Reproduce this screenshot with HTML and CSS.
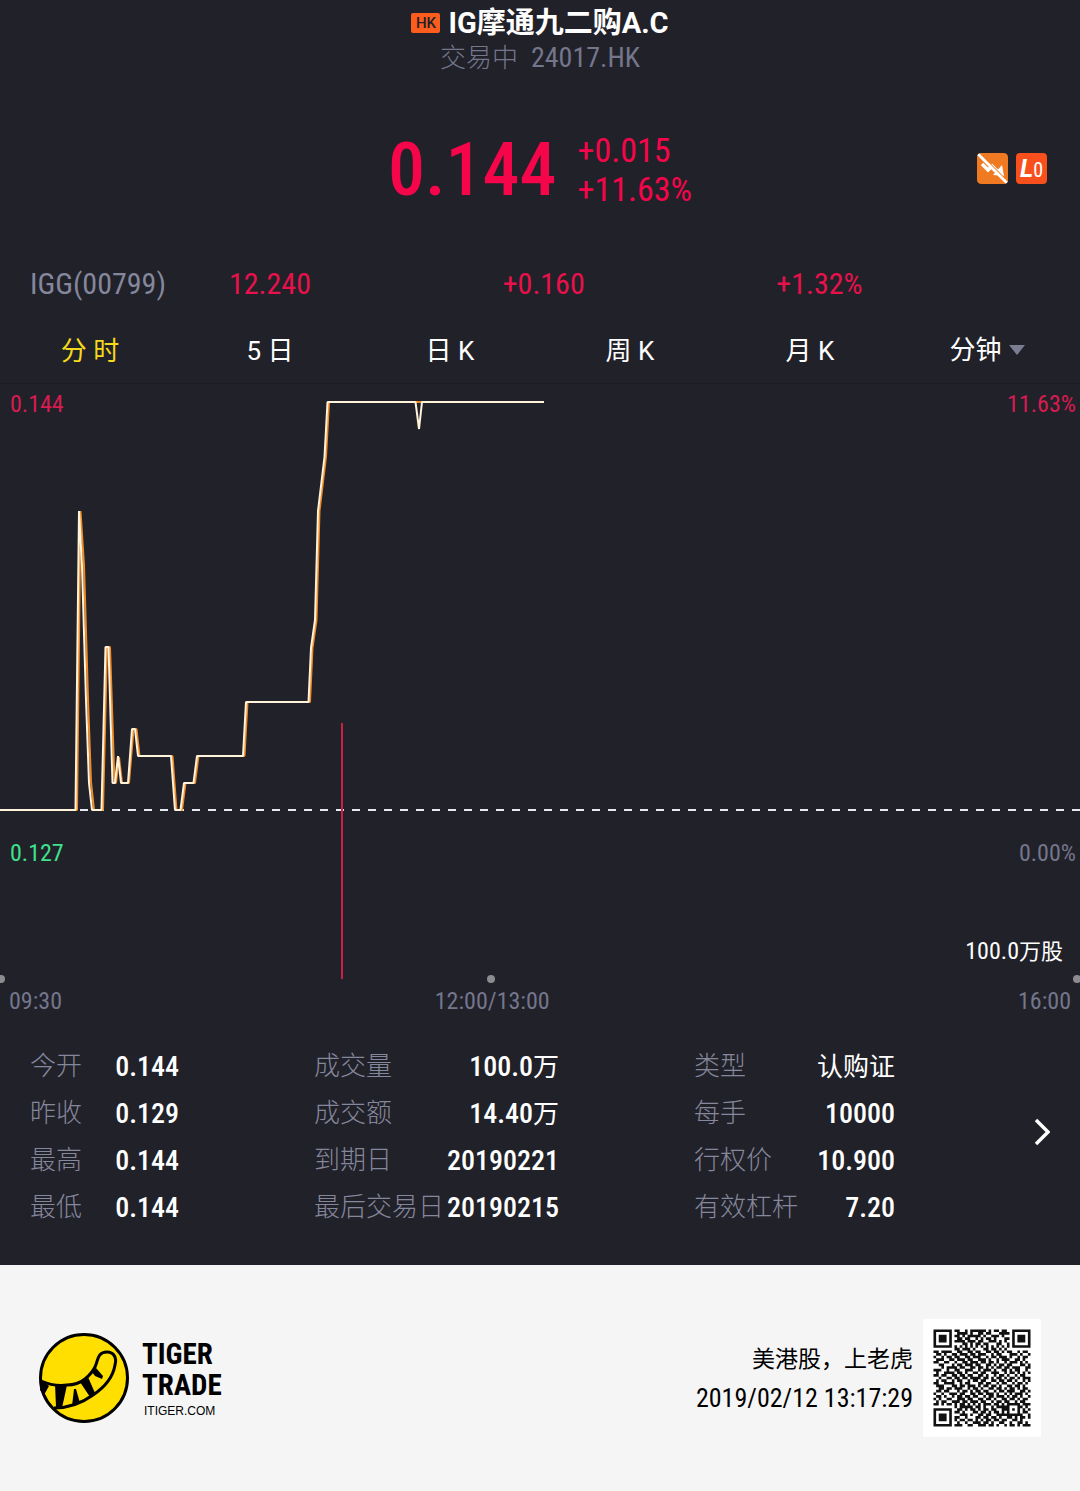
FILE: index.html
```
<!DOCTYPE html>
<html lang="zh-CN">
<head>
    <meta charset="UTF-8">
    <meta name="viewport" content="width=device-width, initial-scale=1.0">
    <title>IG摩通九二购A.C 24017.HK</title>
    <link rel="stylesheet" href="styles.css">
</head>
<body>
    <main class="quote">
        <header class="header">
            <h1><span class="market">HK</span>IG摩通九二购A.C</h1>
            <p class="status"><span class="state">交易中</span><span>24017.HK</span></p>
        </header>

        <section class="price-row">
            <div class="price-group">
                <strong class="price">0.144</strong>
                <div class="change">
                    <span>+0.015</span>
                    <span>+11.63%</span>
                </div>
            </div>
            <div class="badges">
                <svg class="badge" viewBox="0 0 31 31" role="img" aria-label="不可卖空">
                    <rect width="31" height="31" rx="4" fill="#f07a22"/>
                    <path d="M5 11l6 6 4-4 6 6" fill="none" stroke="#fff" stroke-width="3.4"/>
                    <path d="M25 12l2 11-11-1z" fill="#fff"/>
                    <path d="M3 1L31 29" stroke="#f07a22" stroke-width="1.6"/>
                    <path d="M1 1L30 30" stroke="#fff" stroke-width="2.8"/>
                </svg>
                <span class="badge level"><b>L</b>0</span>
            </div>
        </section>

        <section class="underlying">
            <span class="name">IGG(00799)</span>
            <span>12.240</span>
            <span>+0.160</span>
            <span>+1.32%</span>
        </section>

        <nav class="tabs">
            <button type="button" class="tab active">分 时</button>
            <button type="button" class="tab">5 日</button>
            <button type="button" class="tab">日 K</button>
            <button type="button" class="tab">周 K</button>
            <button type="button" class="tab">月 K</button>
            <label class="tab minute">
                <select aria-label="分钟">
                    <option>分钟</option>
                </select>
                <svg class="arrow" viewBox="0 0 16 10"><path d="M0 0h16L8 10z" fill="#7b7d92"/></svg>
            </label>
        </nav>

        <section class="chart">
            <svg class="plot" viewBox="0 0 1080 600" role="img" aria-label="分时走势">
                <!-- previous close -->
                <path class="base" d="M0 426H1080"/>
                <!-- average line -->
                <polyline class="avg" points="0,426 77,426 80.5,127 84,181 88,315 91,398 94,426 103,426 107,263 110,263 114.5,399 116,399 119,373 122,399 129,399 133.5,345 136.5,345 139.5,372 172.5,372 176.5,426 182,426 185.5,399 195,399 198.5,372 244.5,372 247.5,318 310,318 312.5,264 316.5,236 319.5,127 326,73 329,18 544,18"/>
                <!-- price line -->
                <polyline class="line" points="0,426 75.5,426 79,127 82,182 86,316 89,399 92,426 101.5,426 105.5,263 108.5,263 112.5,399 115,399 118,372 121,399 128,399 132,345 135,345 138,372 171,372 175,426 180.5,426 184,399 193.5,399 197,372 243,372 246,318 308.5,318 311,264 315,236 318,127 324.5,73 327.5,18 415.5,18 419,45 422,18 544,18"/>
                <!-- volume -->
                <path class="volume" d="M342 339V595"/>
                <g fill="#8b8b90">
                    <circle cx="1" cy="595" r="4"/>
                    <circle cx="491" cy="595" r="4"/>
                    <circle cx="1077" cy="595" r="4"/>
                </g>
            </svg>
            <span class="mark high">0.144</span>
            <span class="mark high-rate">11.63%</span>
            <span class="mark low">0.127</span>
            <span class="mark low-rate">0.00%</span>
            <span class="mark shares">100.0<span class="unit">万股</span></span>
            <div class="axis">
                <span>09:30</span>
                <span>12:00/13:00</span>
                <span>16:00</span>
            </div>
        </section>

        <section class="stats">
            <dl class="stat-open">
                <dt>今开</dt><dd>0.144</dd>
                <dt>昨收</dt><dd>0.129</dd>
                <dt>最高</dt><dd>0.144</dd>
                <dt>最低</dt><dd>0.144</dd>
            </dl>
            <dl class="stat-volume">
                <dt>成交量</dt><dd>100.0<span class="cn">万</span></dd>
                <dt>成交额</dt><dd>14.40<span class="cn">万</span></dd>
                <dt>到期日</dt><dd>20190221</dd>
                <dt>最后交易日</dt><dd>20190215</dd>
            </dl>
            <dl class="stat-type">
                <dt>类型</dt><dd><span class="cn">认购证</span></dd>
                <dt>每手</dt><dd>10000</dd>
                <dt>行权价</dt><dd>10.900</dd>
                <dt>有效杠杆</dt><dd>7.20</dd>
            </dl>
            <button type="button" class="more" aria-label="更多">
                <svg viewBox="0 0 20 30"><path d="M6 3l12 12L6 27" fill="none" stroke="#fff" stroke-width="3.4"/></svg>
            </button>
        </section>
    </main>

    <footer class="footer">
        <div class="brand">
            <svg class="logo" viewBox="0 0 90 90" aria-hidden="true">
                <circle cx="45" cy="45" r="43.5" fill="#ffdf00" stroke="#000" stroke-width="3"/>
                <path d="M2 48C11 52 20 53 28 52C36 52 41 50 46 46C51 42 54 38 56 34C59 28 58 19 68 19C75 19 78 25 76 32C74 44 66 54 54 62C43 70 30 75 15 75" fill="none" stroke="#000" stroke-width="3"/>
                <path d="M2 47l8 6-5 9-4-5zM16 51l12 1-5 23-6-1zM35 56h2l4 14-8 3zM41 49l8-5 7 16-5 4zM53 39l4-4 7 8-1 3-7-3z" fill="#000"/>
            </svg>
            <div class="brand-text">
                <strong>TIGER</strong>
                <strong>TRADE</strong>
                <small>ITIGER.COM</small>
            </div>
        </div>
        <div class="share">
            <p>
                美港股，上老虎<br>
                <time datetime="2019-02-12T13:17:29">2019/02/12 13:17:29</time>
            </p>
            <svg class="qr" viewBox="-4 -4 45 45" role="img" aria-label="二维码">
                <path id="qrPath" fill="#111"/>
            </svg>
        </div>
    </footer>
    <script src="script.js"></script>
</body>
</html>
```
FILE: styles.css
```
* {
    box-sizing: border-box;
}

body {
    margin: 0;
    min-height: 100vh;
    display: flex;
    flex-direction: column;
    background: #f5f5f5;
    color: #fff;
    font-family: "Roboto Condensed", Roboto, "Noto Sans CJK SC", sans-serif;
    font-size: 26px;
}

h1, p, dl, dd {
    margin: 0;
}

button, select {
    padding: 0;
    border: none;
    background: none;
    color: inherit;
    font: inherit;
    cursor: pointer;
}

.quote {
    background: #212129;
    padding: 5px 0 34px;
}

.header {
    text-align: center;
}

h1 {
    display: flex;
    align-items: center;
    justify-content: center;
    gap: 8px;
    font-family: Roboto, "Noto Sans CJK SC", sans-serif;
    font-size: 29px;
    font-weight: bold;
    line-height: 36px;
}

.market {
    width: 29px;
    border-radius: 2px;
    background: #fc5c1c;
    color: #212129;
    font-size: 15px;
    font-weight: 500;
    line-height: 20px;
}

.status {
    color: #74768c;
    font-size: 28px;
    line-height: 34px;
}

.state {
    margin-right: 13px;
    font-size: 26px;
    font-weight: 300;
}

/* price */
.price-row {
    display: grid;
    grid-template-columns: 1fr auto 1fr;
    align-items: center;
    margin-top: 53px;
    padding: 0 33px;
}

.price-group {
    grid-column: 2;
    display: flex;
    align-items: center;
    gap: 21px;
    padding-top: 3px;
    color: #f5054a;
}

.price {
    font-size: 74px;
    font-weight: 500;
    line-height: 78px;
}

.change {
    display: flex;
    flex-direction: column;
    font-size: 34px;
    line-height: 39px;
}

.badges {
    display: flex;
    justify-content: flex-end;
    gap: 8px;
}

.badge {
    width: 31px;
    height: 31px;
    border-radius: 4px;
}

.level {
    display: flex;
    align-items: baseline;
    justify-content: center;
    background: #f8501c;
    font-size: 20px;
    line-height: 31px;
}

.level b {
    font-family: Roboto, sans-serif;
    font-size: 25px;
    font-style: italic;
}

.underlying {
    display: grid;
    grid-template-columns: 199px 1fr 1fr 1fr;
    margin-top: 55px;
    padding: 0 30px;
    color: #e8114b;
    font-size: 30px;
    line-height: 40px;
}

.name {
    color: #85879c;
}

/* tabs */
.tabs {
    display: grid;
    grid-template-columns: repeat(6, 1fr);
    margin-top: 13px;
    border-bottom: 1px solid #1b1b22;
    font-family: Roboto, "Noto Sans CJK SC", sans-serif;
}

.tab {
    height: 66px;
    padding-bottom: 3px;
    text-align: center;
}

.active {
    color: #f5d91c;
}

.minute {
    display: flex;
    align-items: center;
    justify-content: center;
    gap: 6px;
    padding: 0 6px 0 0;
}

.minute select {
    appearance: none;
}

.arrow {
    width: 16px;
    height: 10px;
}

/* chart */
.chart {
    position: relative;
    font-size: 24px;
    line-height: 30px;
}

.plot {
    display: block;
    width: 100%;
    overflow: hidden;
}

.plot .base {
    stroke: #e8eaf2;
    stroke-width: 2;
    stroke-dasharray: 8 8;
}

.plot .avg,
.plot .line {
    fill: none;
    stroke-width: 2;
    stroke-linejoin: bevel;
}

.plot .avg {
    stroke: #f08a24;
}

.plot .line {
    stroke: #fff3dc;
}

.plot .volume {
    stroke: #cc1f45;
    stroke-width: 2;
}

.mark {
    position: absolute;
}

.high {
    top: 5px;
    left: 10px;
    color: #d81b50;
}

.high-rate {
    top: 5px;
    right: 4px;
    color: #d81b50;
}

.low {
    bottom: 152px;
    left: 10px;
    color: #3fe28c;
}

.low-rate {
    right: 4px;
    bottom: 152px;
    color: #74768c;
}

.shares {
    right: 17px;
    bottom: 53px;
}

.unit {
    font-size: 22px;
}

.axis {
    display: grid;
    grid-template-columns: 35% 21% 1fr;
    padding: 2px 9px 4px;
    color: #74768c;
    text-align: center;
}

.axis span:first-child {
    text-align: left;
}

.axis span:last-child {
    text-align: right;
}

/* stats */
.stats {
    display: flex;
    align-items: center;
    justify-content: space-between;
    margin-top: 23px;
    padding: 0 30px;
}

.stats dl {
    display: grid;
    grid-template-columns: auto 1fr;
    grid-auto-rows: 47px;
    line-height: 47px;
    white-space: nowrap;
}

.stats dt {
    color: #85879c;
    font-weight: 300;
}

.stats dd {
    font-size: 28px;
    font-weight: 500;
    text-align: right;
}

.cn {
    font-size: 26px;
    font-weight: normal;
}

.stat-open {
    width: 149px;
}

.stat-volume {
    width: 245px;
}

.stat-type {
    width: 201px;
}

.more {
    width: 20px;
    margin-bottom: 10px;
}

.more svg {
    display: block;
    width: 20px;
    height: 30px;
}

/* footer */
.footer {
    flex: 1;
    display: flex;
    align-items: center;
    justify-content: space-between;
    padding: 53px 39px;
    color: #000;
}

.brand,
.share {
    display: flex;
    align-items: center;
}

.brand {
    gap: 13px;
}

.logo {
    width: 90px;
    height: 90px;
}

.brand-text {
    display: flex;
    flex-direction: column;
    padding-top: 3px;
}

.brand-text strong {
    font-size: 29px;
    line-height: 31px;
}

.brand-text small {
    padding-left: 2px;
    font-family: "Liberation Sans", sans-serif;
    font-size: 12px;
    line-height: 20px;
}

.share {
    gap: 10px;
    font-size: 23px;
    line-height: 39px;
    text-align: right;
}

.share p {
    padding-top: 2px;
}

.share time {
    font-size: 26px;
}

.qr {
    width: 118px;
    height: 118px;
    background: #fff;
}
```
FILE: script.js
```
const rows = [
    '1111111011001011111101011011001111111',
    '1000001001111010011011000111101000001',
    '1011101011010111110100111010001011101',
    '1011101001101100101011010001101011101',
    '1011101011110111011001110101001011101',
    '1000001000011010110110001100101000001',
    '1111111010101010101010101010101111111',
    '0000000011011101000110110101000000000',
    '1101111001100110110011011010110010110',
    '0110100110111011011100101100011101001',
    '1001011011001101110010110111010010110',
    '0111001101110110011101001011100110100',
    '1100110010011011101101101001011101010',
    '0011000101101110110011010110110001101',
    '0001011110110011011010101101101110011',
    '1110010011001110010111010011010110010',
    '0100111101101001101100111001011010101',
    '1101100110110110011010010110100101100',
    '0010011011011011110110101101011010111',
    '0101100101100101101100110110110100101',
    '1100111100101100011011001011001011010',
    '0111000110110111010110110100110110100',
    '0011011011100101101001101101011010110',
    '0110110001011010110110010110111001101',
    '1001001110110011011011101001010111010',
    '0110100101101101100101101110101101001',
    '1010011001110110011011010011011010110',
    '0101100111011011101100101101100101100',
    '1101011010110101010111011010111110111',
    '0000000010111110110100101111100011010',
    '1111111001101011010110110011101010101',
    '1000001011010001101101011010100010110',
    '1011101000111010011011001111111111001',
    '1011101011001000110110110100110101101',
    '1011101010110110101011011011001101000',
    '1000001001001001110110100110010011010',
    '1111111011100110011101101001011010111'
];

let d = '';
rows.forEach((row, y) => {
    [...row].forEach((cell, x) => {
        if (cell === '1') {
            d += `M${x} ${y}h1v1h-1z`;
        }
    });
});
document.getElementById('qrPath').setAttribute('d', d);
```
